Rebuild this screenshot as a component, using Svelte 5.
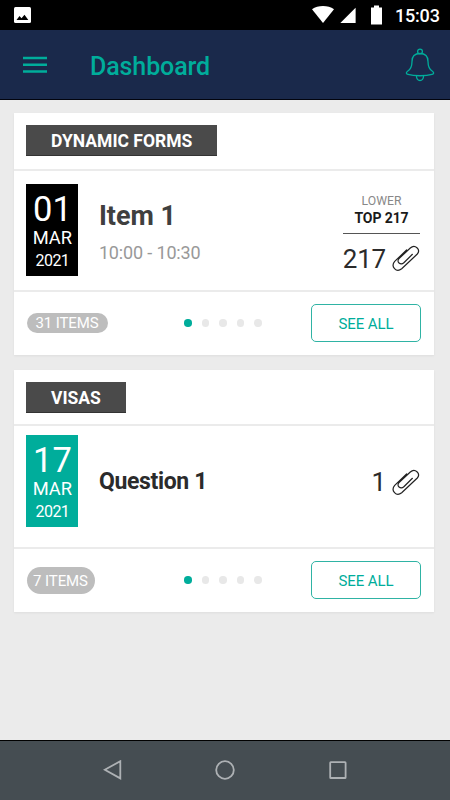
<script>
    const cards = [
        {
            title: "DYNAMIC FORMS",
            day: "01",
            month: "MAR",
            year: "2021",
            name: "Item 1",
            time: "10:00 - 10:30",
            lower: "LOWER",
            top: "TOP 217",
            files: 217,
            items: 31,
            kind: "forms",
        },
        {
            title: "VISAS",
            day: "17",
            month: "MAR",
            year: "2021",
            name: "Question 1",
            files: 1,
            items: 7,
            kind: "visas",
        },
    ];
    const pages = [0, 1, 2, 3, 4];
</script>

<div class="screen">
    <div class="status">
        <svg class="photo" width="17" height="16" viewBox="0 0 17 16">
            <rect width="17" height="16" rx="1.5" fill="#fff" />
            <path d="M2.5 13 L5.5 9 L7.5 11.3 L10.5 7.7 L14.3 13 Z" fill="#000" />
        </svg>
        <svg class="signals" width="71" height="20" viewBox="0 0 71 20">
            <path d="M0 4.2 C6 0 16 0 22 4.2 L11 18 Z" fill="#fff" />
            <path d="M28.3 18 L43.6 2.8 V18 Z" fill="#fff" />
            <path d="M59 2.6 H62 V0.5 H67 V2.6 H70 V19.5 H59 Z" fill="#fff" />
        </svg>
        <span class="clock">15:03</span>
    </div>

    <header>
        <svg class="menu" width="24" height="18" viewBox="0 0 24 18">
            <path d="M0 2 H24 M0 8.8 H24 M0 15.5 H24" stroke="#00ad9b" stroke-width="2.6" />
        </svg>
        <h1>Dashboard</h1>
        <svg class="bell" width="30" height="34" viewBox="0 0 30 34" fill="none" stroke="#00ad9b" stroke-width="1.3">
            <circle cx="15" cy="3.5" r="2.4" />
            <path d="M15 5.5 C9.5 5.5 7 9 7 13.5 C7 19 6 21.5 2.3 23.5 C0.7 24.6 1.3 26 3 26.4 C9 28.2 21 28.2 27 26.4 C28.7 26 29.3 24.6 27.7 23.5 C24 21.5 23 19 23 13.5 C23 9 20.5 5.5 15 5.5 Z" />
            <path d="M11.5 28 C11.2 34 18.8 34 18.5 28" />
        </svg>
    </header>

    <main>
        {#each cards as card}
            <section class="card {card.kind}">
                <div class="head">
                    <h2>{card.title}</h2>
                </div>
                <div class="body">
                    <div class="date">
                        <span class="day">{card.day}</span>
                        <span class="month">{card.month}</span>
                        <span class="year">{card.year}</span>
                    </div>
                    <div class="info">
                        <h3>{card.name}</h3>
                        {#if card.time}
                            <p>{card.time}</p>
                        {/if}
                    </div>
                    <div class="side">
                        {#if card.lower}
                            <div class="range">
                                <span>{card.lower}</span>
                                <b>{card.top}</b>
                            </div>
                        {/if}
                        <div class="files">
                            <span>{card.files}</span>
                            <svg width="28" height="27" viewBox="0 0 28 27" fill="none" stroke="#222" stroke-width="1.2" stroke-linecap="round">
                                <path d="M14.6 5 L2.7 16.4 C-1.6 21.4 4.2 28 9.7 23.7 L25.3 9 C29 4.6 23 -1.4 18.3 3 L7.3 13.3 C3.6 17 8.6 20.7 12.1 17.5 L20.4 9.3" />
                            </svg>
                        </div>
                    </div>
                </div>
                <div class="foot">
                    <span class="count">{card.items} ITEMS</span>
                    <div class="dots">
                        {#each pages as page}
                            <i class:active={page === 0}></i>
                        {/each}
                    </div>
                    <button>SEE ALL</button>
                </div>
            </section>
        {/each}
    </main>

    <nav>
        <svg width="20" height="20" viewBox="0 0 20 20"><path d="M17.3 1.2 V18.4 L1.8 9.8 Z" /></svg>
        <svg width="20" height="20" viewBox="0 0 20 20"><circle cx="10" cy="10" r="8.8" /></svg>
        <svg width="20" height="20" viewBox="0 0 20 20"><rect x="2.2" y="2.2" width="15.4" height="15.8" rx="0.6" /></svg>
    </nav>
</div>

<style>
    :global(body) {
        background: #ebebeb;
    }

    .screen {
        display: flex;
        flex-direction: column;
        height: 800px;
        font-family: Roboto, sans-serif;
        background: #ebebeb;
        overflow: hidden;
    }

    h1,
    h2,
    h3,
    p {
        margin: 0;
    }

    svg {
        display: block;
        flex: none;
    }

    .status {
        display: flex;
        flex: none;
        box-sizing: border-box;
        height: 30px;
        padding: 0 10px 0 14px;
        background: #000;
        color: #fff;
    }

    .photo {
        margin-top: 7px;
    }

    .signals {
        margin: 5px 12px 0 auto;
    }

    .clock {
        width: 45px;
        font-size: 18px;
        font-weight: 500;
        line-height: 32px;
        letter-spacing: -0.2px;
        white-space: nowrap;
    }

    header {
        display: flex;
        flex: none;
        align-items: center;
        box-sizing: border-box;
        height: 70px;
        padding: 0 15px 0 23px;
        background: #1a294b;
        border-bottom: 1px solid #02040e;
    }

    h1 {
        margin: 5px 0 0 43px;
        font-size: 25px;
        font-weight: 500;
        line-height: 30px;
        letter-spacing: -0.1px;
        color: #00ad9b;
    }

    .bell {
        margin-left: auto;
    }

    main {
        flex: 1;
        padding: 12.5px 16px 0 14px;
    }

    .card {
        display: flex;
        flex-direction: column;
        height: 242px;
        margin-bottom: 15px;
        background: #fff;
        box-shadow: 0 1px 2px #ddd;
    }

    .head {
        box-sizing: border-box;
        height: 56px;
        padding: 12.5px 12px 0;
    }

    .visas .head {
        height: 54px;
    }

    h2 {
        display: inline-block;
        box-sizing: border-box;
        height: 31px;
        padding: 0 25px;
        font-size: 17.5px;
        font-weight: 700;
        line-height: 33px;
        color: #fff;
        background: #4a4a4a;
        border: solid #333;
        border-width: 0 0 1px;
    }

    .body {
        display: flex;
        flex: 1;
        box-sizing: border-box;
        padding: 13px 14px 0 12.4px;
        border-top: 2px solid #ebebeb;
        border-bottom: 2px solid #ebebeb;
    }

    .visas .body {
        padding-top: 9.5px;
    }

    .date {
        display: flex;
        flex-direction: column;
        align-items: center;
        width: 52px;
        height: 92px;
        color: #fff;
        background: #000;
    }

    .visas .date {
        background: #00ad9b;
    }

    .day {
        height: 42px;
        font-size: 34.5px;
        line-height: 50px;
    }

    .month {
        height: 23px;
        font-size: 18.3px;
        line-height: 24px;
    }

    .year {
        font-size: 16px;
        line-height: 24px;
        letter-spacing: -0.6px;
    }

    .info {
        margin-left: 20.5px;
        padding-top: 14px;
    }

    h3 {
        font-size: 27px;
        font-weight: 700;
        line-height: 36px;
        color: #3f3f3f;
    }

    .visas h3 {
        padding-top: 15px;
        font-size: 23px;
        letter-spacing: -0.35px;
        color: #2b2b2b;
    }

    .info p {
        margin-top: 8px;
        font-size: 18px;
        line-height: 22px;
        letter-spacing: -0.15px;
        color: #999;
    }

    .side {
        width: 77px;
        margin-left: auto;
    }

    .range {
        display: flex;
        flex-direction: column;
        align-items: center;
        box-sizing: border-box;
        height: 50px;
        padding-top: 8px;
        font-size: 12.2px;
        line-height: 18px;
        color: #888;
        border-bottom: 1px solid #555;
    }

    .range b {
        font-size: 14px;
        line-height: 17px;
        letter-spacing: -0.1px;
        color: #1a1a1a;
    }

    .files {
        display: flex;
        justify-content: flex-end;
        align-items: center;
        gap: 6px;
        height: 30px;
        margin-top: 10px;
        font-size: 26px;
        letter-spacing: -0.2px;
        color: #2b2b2b;
    }

    .visas .files {
        margin-top: 32px;
    }

    .foot {
        display: flex;
        align-items: center;
        box-sizing: border-box;
        height: 63px;
        padding: 0 13px 0 12.5px;
    }

    .count {
        box-sizing: border-box;
        width: 81px;
        height: 20px;
        font-size: 15px;
        line-height: 21px;
        letter-spacing: -0.1px;
        text-align: center;
        white-space: nowrap;
        color: #fff;
        background: #bdbdbd;
        border-radius: 14px;
    }

    .visas .count {
        width: 68px;
        height: 27px;
        line-height: 28px;
    }

    .dots {
        display: flex;
        gap: 10px;
        margin-left: 76.5px;
    }

    .visas .dots {
        margin-left: 89.5px;
    }

    .dots i {
        width: 7.5px;
        height: 7.5px;
        border-radius: 50%;
        background: #e8e8e8;
    }

    .dots i.active {
        background: #00ad9b;
    }

    button {
        box-sizing: border-box;
        width: 110px;
        height: 38px;
        margin-left: auto;
        padding: 1px 0 0;
        font-family: inherit;
        font-size: 15px;
        letter-spacing: -0.1px;
        color: #00ad9b;
        background: none;
        border: 1px solid #2fb3a4;
        border-radius: 5px;
    }

    nav {
        display: flex;
        flex: none;
        justify-content: center;
        gap: 92.5px;
        box-sizing: border-box;
        height: 60px;
        padding-top: 19px;
        background: #454d52;
        border-top: 1px solid #000;
    }

    nav svg {
        fill: none;
        stroke: #adb1b4;
        stroke-width: 1.8;
    }
</style>
